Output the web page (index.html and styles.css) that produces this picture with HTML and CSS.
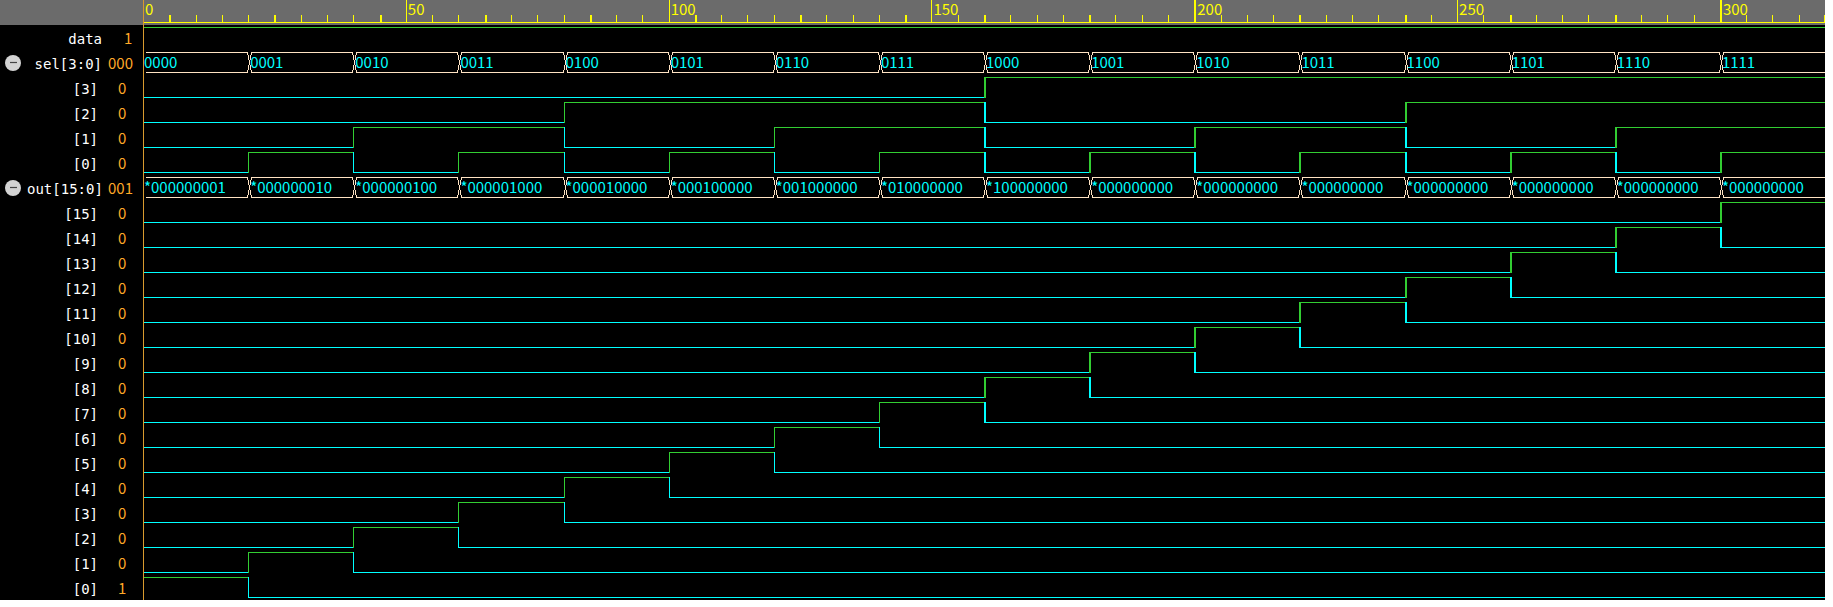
FILE: index.html
```html
<!DOCTYPE html>
<html lang="en">
<head>
<meta charset="utf-8">
<title>Waveform viewer</title>
<link rel="stylesheet" href="styles.css">
</head>
<body>
<main class="viewer">
  <header class="ruler">
    <div class="corner"></div>
    <div class="scale" id="scale"></div>
  </header>
  <div class="signals" id="signals"></div>
</main>
<script src="waves.js"></script>
</body>
</html>
```
FILE: styles.css
```css
* { box-sizing: border-box; }
body {
  margin: 0;
  padding: 0 8px 7px 0;
  background: #fff;
  font-family: "DejaVu Sans Mono", monospace;
  font-size: 14px;
}
.viewer { position: relative; background: #000; }
/* time cursor, drawn over the ruler and every wave */
.viewer::after {
  content: "";
  position: absolute;
  top: 0;
  bottom: 0;
  left: 143px;
  width: 1px;
  background: #d89a2e;
}
.ruler, .signal {
  display: grid;
  grid-template-columns: 143px 1fr;
  grid-template-rows: 25px;
}
.ruler { background: #6b6b6b; }
.scale {
  display: grid;
  grid-template-columns: repeat(64, 1fr);
  height: 23px;
  border-bottom: 1px solid #ff0;
  color: #ff0;
}
.scale, .value, .bus { font-family: "Noto Sans CJK SC", sans-serif; font-size: 15px; }
.tick { display: flex; align-items: flex-end; min-width: 0; height: 22px; white-space: nowrap; }
.tick::before { content: ""; flex: none; width: 1px; height: 7px; background: #ff0; }
.tick.thick::before { width: 2px; }
.tick.major::before { height: 22px; }
.tick.origin::before { visibility: hidden; }
.tick:last-child { justify-content: space-between; }
.tick:last-child::after { content: ""; width: 1px; height: 7px; background: #ff0; }
.tick span { width: 0; padding-left: 1px; align-self: flex-start; line-height: 18px; }
.label {
  display: grid;
  grid-template-columns: 26px 75px 1fr;
  grid-template-rows: 25px;
  column-gap: 1px;
  line-height: 25px;
  color: #fff;
}
.toggle {
  padding: 0;
  margin: 5px 0 0 5px;
  width: 16px;
  height: 16px;
  border: 0;
  background: none;
}
.toggle svg { display: block; }
.name { grid-column: 2; padding-top: 2px; text-align: right; white-space: nowrap; }
.bit .name { padding-right: 4px; }
.value { grid-column: 3; padding-left: 5px; color: #ffa928; }
.bit .value { padding-left: 15px; }
.single .value { padding-left: 21px; }
.wave {
  display: grid;
  grid-template-columns: repeat(16, 1fr);
  grid-template-rows: 21px;
  padding: 2px 0;
}
.level { border: 0 solid #32cd32; }
.level.high { border-top-width: 1px; }
.level.low { border-bottom-width: 1px; border-color: #0ff; }
.level.edge { border-left-width: 1px; }
.level.edge.thick { border-left-width: 2px; }
.bus {
  display: flex;
  min-width: 0;
  color: #0ff;
  line-height: 20px;
  background: linear-gradient(#ffe4c4, #ffe4c4) 3px 0 / calc(100% - 3px) 1px no-repeat, linear-gradient(#ffe4c4, #ffe4c4) 3px 100% / calc(100% - 3px) 1px no-repeat;
}
.bus svg { flex: none; width: 5px; height: 21px; margin: 0 -2px 0 -1px; }
.bus span { width: 0; white-space: nowrap; }
.bus:first-child span { padding-left: 1px; }
```
FILE: waves.js
```js
const slots = Array.from({ length: 16 }, (_, i) => i);

const scale = document.getElementById("scale");
for (let i = 0; i < 64; i++) {
  const major = i % 10 === 0;
  const thick = i % 4 === (i < 32 ? 1 : 0);
  const kind = [i === 0 && "origin", major && "major", thick && "thick"].filter(Boolean).join(" ");
  const label = major ? `<span>${i * 5}</span>` : "";
  scale.insertAdjacentHTML("beforeend", `<div class="tick ${kind}">${label}</div>`);
}

const minus = `<svg width="16" height="16" viewBox="0 0 16 16"><circle cx="8" cy="8" r="8" fill="#d3d3d3"/><path d="M5 7.5h7" stroke="#444" stroke-width="1.2"/></svg>`;
const cross = `<svg viewBox="0 0 5 21" fill="none" stroke="#ffe4c4" shape-rendering="crispEdges"><path d="M.5 0V3M1.5 3V8M2.5 8V13M1.5 13V18M.5 18V21M4.5 0V3M3.5 3V8M3.5 13V18M4.5 18V21"/></svg>`;

const levels = (values) => values.map((v, i) => {
  const edge = i > 0 && v !== values[i - 1];
  return `<div class="level ${v ? "high" : "low"} ${edge ? "edge" : ""} ${i > 7 ? "thick" : ""}"></div>`;
}).join("");

const bus = (texts) => texts.map((t, i) => `<div class="bus">${i ? cross : ""}<span>${t}</span></div>`).join("");

const signals = document.getElementById("signals");
function addSignal(kind, name, value, wave) {
  const button = kind === "group" ? `<button class="toggle" aria-label="Collapse ${name}">${minus}</button>` : "";
  signals.insertAdjacentHTML("beforeend",
    `<div class="signal ${kind}"><div class="label">${button}<span class="name">${name}</span><span class="value">${value}</span></div><div class="wave">${wave}</div></div>`);
}

addSignal("single", "data", "1", levels(slots.map(() => 1)));
addSignal("group", "sel[3:0]", "000", bus(slots.map((i) => i.toString(2).padStart(4, "0"))));
for (let b = 3; b >= 0; b--) {
  addSignal("bit", `[${b}]`, "0", levels(slots.map((i) => (i >> b) & 1)));
}
addSignal("group", "out[15:0]", "001", bus(slots.map((i) => "*" + (2 ** i).toString(2).padStart(16, "0").slice(-9))));
for (let b = 15; b >= 0; b--) {
  addSignal("bit", `[${b}]`, b ? "0" : "1", levels(slots.map((i) => (i === b ? 1 : 0))));
}
```
